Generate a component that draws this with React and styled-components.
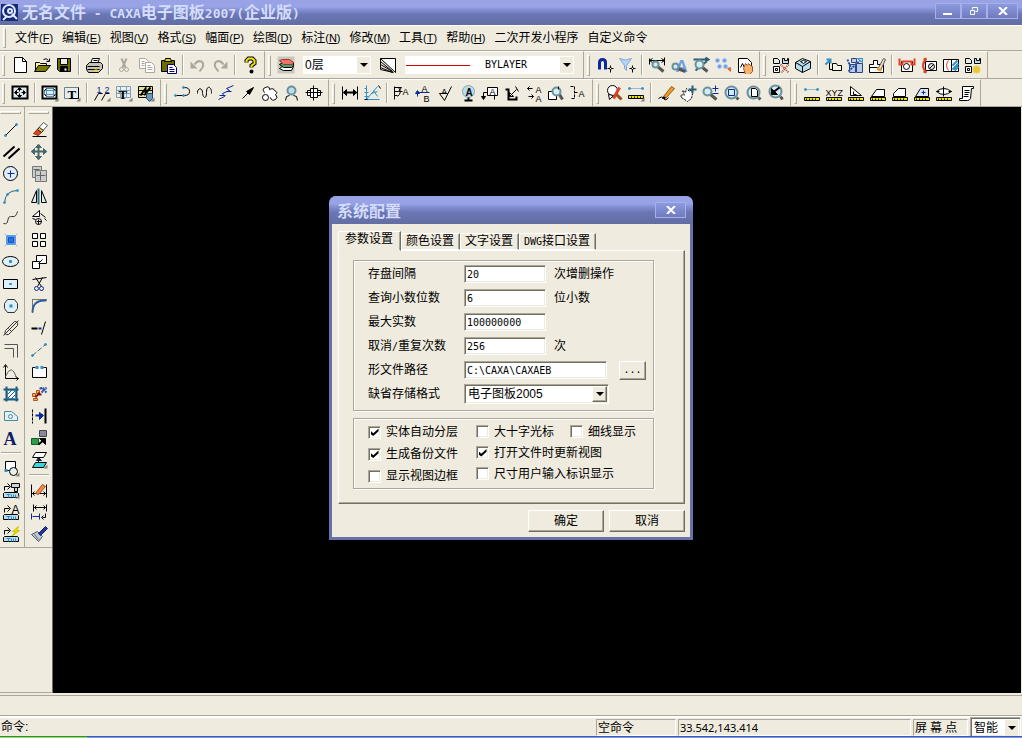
import React from 'react';
import styled, { createGlobalStyle, css } from 'styled-components';

const face = '#efebde';
const shade = '#aca899';
const dark = '#716f64';

const GlobalStyle = createGlobalStyle`
  *, *::before {
    box-sizing: border-box;
  }
  body {
    margin: 0;
    background: ${face};
    color: #000;
    font-family: "Liberation Sans", "Noto Sans CJK SC", sans-serif;
    font-size: 12px;
    line-height: 16px;
  }
  button, input, select {
    margin: 0;
    color: inherit;
    font: inherit;
  }
`;

/* ---------- icons ---------- */

const K = '#000';
const W = '#fff';
const G = '#aaa79b';
const B = '#0a2a9c';
const C = '#2f8fc8';
const L = '#b9dcee';
const Y = '#f2e600';
const R = '#d8432a';
const O = '#f09a2a';

const dot = (x, y, r) => `M${x - r} ${y}a${r} ${r} 0 1 0 ${2 * r} 0a${r} ${r} 0 1 0 ${-2 * r} 0z`;
const corner = ['M17 13v4h-4z', 'none', '#85837a'];
const lens = (x, y, r) => [
  [`M${x + r - 1} ${y + r - 1}L15 15`, '#555', 'none', 3],
  [dot(x, y, r), '#6b929c', '#d3edf3', 2],
];
const ruler = [['M1 13h15v3H1z', K, Y], ['M3 14v2M6 14v2M9 14v2M12 14v2', K]];
const thb = [['M2 11h13l1 1v4H1v-4z', K, L], ['M4 13h4M6 13v3M9 13v3M11 13v3M13 13v3', C]];
const blocks = [['M1 2h4l2 2v3H1z', K, '#e8e8e8'], ['M1 10h6v6H1zM3 12h2v2H3z', K, W], ['M10 7V2h2v2h3V2h1v5z', K, L]];

// shapes are [d, stroke, fill, width, dash]; objects are letters
const icons = {
  create: [['M3 1h8l4 4v11H3z', K, W], ['M11 1v4h4', K]],
  open: [['M2 15V6h4l1 1h6v3', K, '#f6ef9c'], ['M1 15l4-6h12l-5 6z', K, '#7b7b00'], ['M10 3q3-2 5 1M16 2v3h-3', K]],
  save: [['M2 2h13v13H4l-2-2z', K, '#6b6b00'], ['M5 2h7v6H5z', K, face], ['M5 10h7v5H5z', K, K], ['M10 12v2', W, 'none', 2]],
  print: [['M5 7l2-5h7l-2 5', K, W], ['M1 9l3-3h11l2 2v4l-4 4H3l-2-3z', K, '#c5c1b4'], ['M2 10h12M2 13h12M8 4h4', K], ['M9 14h3', Y, 'none', 2]],
  cut: [['M6 2l4 9M11 2l-4 9', G, 'none', 2], [dot(6, 13, 2), G], [dot(11, 13, 2), G]],
  copy: [['M2 2h6l3 3v7H2z', G, W], ['M8 6h6l3 3v7H8z', G, W], ['M4 5h3M4 7h3M4 9h3M10 9h3M10 11h5M10 13h5', G]],
  paste: [['M2 4h13v11H2z', K, '#6b6b00'], ['M5 5l1-3h5l1 3z', K, '#d6d200'], ['M8 8h6l3 3v6H8z', '#00007b', W], ['M10 11h3M10 13h5M10 15h5', '#00007b']],
  undo: [['M5 8c4-6 11-3 8 3l-3 4', G, 'none', 2], ['M1 5v7h7z', 'none', G]],
  redo: [['M12 8C8 2 1 5 4 11l3 4', G, 'none', 2], ['M16 5v7H9z', 'none', G]],
  help: [['M5 6V4l2-2h4l2 2v3l-3 2v2', K, 'none', 4], ['M5 6V4l2-2h4l2 2v3l-3 2v2', Y, 'none', 2], [dot(10, 15, 1), K, Y, 2]],
  layers: [['M0 0h17v17H0z', 'none', '#c9c6bc'], ['M2 12l3-2h11l-2 4H6z', K, W], ['M2 8l3-2h11v3l-2 2H6z', K, '#45a86a'], ['M2 4l3-1h7l4 3-1 2H6z', '#9c3434', '#ee7468']],
  linetype: [['M1 2h15v14z', K, W], ['M1 2v3l12 10M1 5v3l12 7M1 8v3l12 5M1 11v2l13 3', K]],
  magnet: [['M3 13V6q0-3 3-3t3 3v7', B, 'none', 3], ['M14 9v7M11 12h6', K], [dot(14, 12, 1), K, W]],
  funnel: [['M1 2q6 3 12 0L8 9v5l-2-2V9z', '#7ca7de', '#b7d3f5'], ['M14 9v7M11 12h6', K], [dot(14, 12, 1), K, W]],
  zoomWidth: [['M1 2v6M16 1v8M1 4h15M4 2L1 4l3 2M13 2l3 2-3 2', K], ...lens(7, 8, 3)],
  zoomText: [{ t: 'A', x: 5, y: 15, s: 17, c: '#6fa1e4', b: true }, ...lens(5, 10, 3)],
  zoomDim: [['M1 3h15M13 1l3 2-3 2M3 14L14 5', '#2c5c78', 'none', 2], ...lens(7, 8, 4)],
  starSet: [[`${dot(3, 4, 2)}${dot(10, 4, 2)}${dot(5, 10, 2)}${dot(11, 10, 2)}`, '#a9c6f5', '#6f9be2'], ['M13 12l3 3v-4z', '#e06a3c', '#e06a3c']],
  handSheet: [['M2 2h9l4 4v10H2z', K, W], ['M4 11l2-4 2 4', K], ['M7 12l2-5 2 2 1-2 2 2 2 1v5l-3 3H9z', '#a8511c', '#f5b46c']],
  blockDelete: [...blocks, ['M8 8l8 8M16 8l-7 8', '#b04a3c', 'none', 2, '1 1']],
  cube: [['M1 6l7-4 8 3v7l-8 4-7-4z', K, L], ['M1 6l7 4 8-5M8 10v6', K], ['M6 5l3-1 3 1-3 2z', K, W]],
  blockIn: [['M1 8l5-5', C, 'none', 2], ['M2 3h4v4', C, 'none', 2], ['M5 6v7h3', K], ['M8 7h4l1 2h4v5H8z', K, '#f3f6e6']],
  blockEdit: [['M5 2h5v4H5zM3 8h6v8H3zM10 7h6v9h-6z', '#29457c', '#b9cdea'], ['M1 3l4 10M2 15l6-6 8-7', '#234da8', 'none', 2, '2 1'], ['M11 2h5v4z', C, L]],
  blockBrush: [['M1 8h4V4h4v4h6v8H1z', K, W], ['M1 11h8', K], ['M9 13l6-11 2 1-5 11z', '#555', '#f1e2c8'], ['M9 12l4 2', O, 'none', 3]],
  partA: [['M3 5h11v10H3z', K, W], [dot(8, 10, 3), K], ['M1 2v6h3V5h9v3h3V2', R, 'none', 2]],
  partB: [['M5 5h11v9H5z', K, W], [dot(11, 10, 3), K, '#ddd'], ['M9 12l4-4', K], ['M6 2Q-1 9 6 16M6 2l-3 1M6 16l-3-1', R, 'none', 2]],
  partC: [['M1 3h15v12H1z', K, W], ['M9 3v12', K], ['M6 4q-4 5 0 10', R], ['M10 9l5-5M10 13l6-6M12 14l4-4', C, 'none', 2]],
  partD: [...blocks, ['M12 9v8M8 13h8M9 10l6 6M15 10l-6 6', '#e6c832', 'none', 2]],

  fit: [['M1 2h15v12H1z', K, '#dde9ea', 2], ['M8 4v3M8 9v3M4 8h3M10 8h3', K, 'none', 1], ['M6 5l2-2 2 2zM6 11l2 2 2-2zM5 6L3 8l2 2zM12 6l2 2-2 2z', K, K, 1]],
  frame: [['M1 2h14v12H1z', K, W, 2], ['M5 4h7v8H5zM3 6h11v4H3z', '#5f8fae', '#dcebf5'], ['M5 4L3 6M12 4l2 2M5 12l-2-2M12 12l2-2', K], corner],
  titleBlock: [['M1 3h14v11H1z', '#6c8490', '#e4eef0'], ['M15 3v11H6', K], { t: 'T', x: 4, y: 14, s: 13, c: K, b: true, serif: true }, corner],
  number: [{ t: '1', x: 3, y: 8, s: 9, c: B }, { t: '2', x: 11, y: 8, s: 9, c: B }, ['M1 16l4-7h4M8 16l4-7h4', K], corner],
  textTable: [['M1 2h14v11H1zM1 6h14M1 9h14M5 2v11M11 2v11', '#7fa0b0', '#e9f1f2'], { t: 'T', x: 3, y: 14, s: 13, c: K, b: true, serif: true }, corner],
  styleEdit: [['M1 2h14v11H1z', K, '#e7e48a'], ['M1 6h14M1 10h14', K], ['M3 11l5-7v5l5-6', K, 'none', 2], ['M9 9h6v5l-3 3-3-3z', '#24466e', '#6e95be'], corner],
  polyline: [['M2 11h9q5 0 5-4t-5-4', K], [`${dot(2, 11, 1)}${dot(10, 11, 1)}${dot(10, 3, 1)}`, C, C]],
  wave: [['M2 8c0-5 5-5 5 0s4 8 4 0 5-6 5 0', K], ['M2 8v1M16 8v1', K]],
  zigzag: [['M1 15l6-3-2-3 7-3-3-2 7-3', B, 'none'], ['M2 11h6M9 7h5', B]],
  arrow: [['M3 14l6-6', K], ['M7 7l7-4-4 7z', K, K]],
  cloud: [['M3 8q-3-4 1-5 4-2 4 2 4-2 5 1 4 2 1 4 3 3 0 5-4 2-5-2', K, W], [dot(4, 13, 3), K, W]],
  magnifierHand: [[dot(8, 6, 4), '#6b929c', L, 2], ['M2 16l1-4 3-1M14 16l-1-4-3-1', K]],
  axisBox: [['M5 4h7v9H5zM2 6h3v5H2zM12 6h3v5h-3z', K, W], ['M0 8h17M8 1v15', K]],
  dimWidth: [['M1 2v13M16 2v13', K], ['M2 8h13', K, 'none', 2], ['M5 5L2 8l3 3zM12 5l3 3-3 3z', K, K]],
  dimCoord: [['M3 1v14h13M3 15L14 2', C], ['M1 4h2M1 8h4M1 12h4M10 6l4 6M8 9l6-2', C, 'none'], ['M15 1l2 3M1 15h3', K]],
  roughness: [['M1 2v13M1 3h7l-3 4h4M1 7h4M1 11h3M5 3q4 5-1 9', K], { t: 'A', x: 9, y: 10, s: 9, c: K }],
  toleranceAB: [{ t: 'A', x: 6, y: 7, s: 9, c: K }, { t: 'B', x: 8, y: 17, s: 9, c: K }, ['M2 12V8h12', B], ['M0 9l2-3 2 3z', B, B]],
  datum: [['M2 9l5 7 7-14M2 9h8', K], { t: 'A', x: 4, y: 9, s: 8, c: K }],
  datumLens: [[dot(9, 7, 6), '#8aa6ae', L, 1], { t: 'A', x: 6, y: 11, s: 10, c: K, b: true }, ['M5 16h8M9 13v3', K, 'none', 2]],
  leaderText: [['M6 3h10v8H6z', K, W], { t: 'A', x: 8, y: 10, s: 9, c: K }, ['M6 8H2v4M13 11v4', K, 'none', 1], ['M0 12h4l-2 3z', K, K]],
  weld: [['M2 5h3v10h8v-3', K, 'none', 2], ['M6 12l7-7', K], ['M6 8v4h4zM12 2l3 5', K]],
  swapText: [['M2 4h5M2 4l2-2M2 4l2 2M3 12h5l-2-2M8 12l-2 2', K, 'none', 1], { t: 'A', x: 10, y: 8, s: 9, c: K }, { t: 'A', x: 10, y: 17, s: 9, c: K }],
  lensBlock: [['M1 7h8v8H1z', K, W], ...lens(9, 7, 4), ['M11 2v3', K]],
  dimText: [['M1 2h4v12H1M5 8h4', K, 'none', 1, '3 1'], { t: 'A', x: 9, y: 12, s: 9, c: K }],
  find: [[dot(7, 6, 5), K, W], ['M3 10l5 1-4 4z', K, W], ['M8 14l6-11', R, 'none', 3], ['M11 10l5 5', '#9c4f1c', 'none', 3]],
  measure: [['M2 4h13', C, 'none', 1, '1 1'], [`${dot(2, 4, 1)}${dot(15, 4, 1)}`, C, C], ['M1 11h15v3H1z', K, Y], ['M4 12v2M7 12v2M10 12v2M13 12v2', K], corner],
  pencil: [['M1 14q3-3 5 0t5-1', K], ['M6 12l8-10 3 2-8 9z', '#8c5a1b', O], ['M5 13l3 1', K, 'none', 2]],
  pan: [['M2 13q-2-4 3-2L3 6l3 2 1-4 3 3 2-2 1 4-1 5-4 3z', K, W, 1, '2 1'], ['M13 1v8M9 5h8', '#26607a', 'none', 2]],
  zoomScale: [...lens(6, 7, 4), ['M14 1v6M11 4h6M11 9h6', B]],
  zoomWindow: [...lens(8, 8, 6), ['M5 5h6v6H5z', B, 'none']],
  zoomPage: [...lens(8, 8, 6), ['M6 4h4l2 2v6H6z', K, W]],
  zoomBack: [...lens(8, 7, 6), ['M4 9l8-6', K, 'none', 2], ['M4 4v6h6z', K, K]],
  qDist: [['M2 5h13', C, 'none', 1, '1 1'], [`${dot(2, 5, 1)}${dot(14, 5, 1)}`, C, C], ...ruler],
  qCoord: [{ t: 'XYZ', x: 0, y: 11, s: 9, c: K }, ...ruler],
  qAngle: [['M3 2v9h11z', K, W], ['M6 7v3h3', K], ...ruler],
  qArea: [['M2 12l5-7h8v7z', K, W], ...ruler],
  qPerimeter: [['M2 12V9l5-5h7v8z', K, W], ...ruler],
  qCenter: [['M2 12l5-8h8v8z', K, '#dce9f4'], ['M10 6v4M8 8h4', B], ...ruler],
  qInertia: [['M1 7q7-6 15 0-8 6-15 0zM8 2v10M1 7h3M13 7h3', K, W], ...ruler],
  qSystem: [['M5 2h11v2h-2l-1 10q-1 2-3 2H2v-2h3z', K, W], ['M7 6h5M7 8h5M7 10h4M6 12h5', K]],

  line: [['M3 14L14 3', K, 'none', 1], [`${dot(3, 14, 1)}${dot(14, 3, 1)}`, C, C]],
  parallel: [['M1 13L12 3M6 15L17 5', K, 'none', 2]],
  circle: [[dot(8, 8, 7), K, '#dfeefa'], ['M8 5v7M5 8h7', B]],
  arc: [['M2 15Q3 3 15 3', '#2a627c', 'none'], [`${dot(2, 15, 1)}${dot(5, 7, 1)}${dot(15, 3, 1)}`, C, C]],
  spline: [['M1 14c6 2 3-7 7-7s5 1 7-5', '#333']],
  point: [['M4 4h9v9H4z', '#5a9ae6', '#5a9ae6'], ['M6 6h5v5H6z', '#1756c0', '#2c6fd8'], ['M2 2l2 2M15 2l-2 2M2 15l2-2M15 15l-2-2', '#8fb8ea']],
  ellipse: [['M0 8a8 5 0 1 0 16 0a8 5 0 1 0-16 0z', K, '#dff0f8'], ['M7 7h2v2H7z', C, C]],
  rect: [['M1 4h14v9H1z', K, '#dff0f8'], ['M7 8h2v1H7z', C, C]],
  polygon: [['M5 2h7l3 4v5l-3 4H5l-3-4V6z', '#333', '#dff0f8'], ['M8 8h1v1H8z', C, C, 2]],
  hole: [['M3 11L12 2q4 0 3 4l-9 9q-5 1-3-4zM1 16L16 1M6 9l3 3', '#333']],
  offset: [['M2 3h13v13M2 7h9v9', '#555', 'none', 1]],
  formula: [['M3 2v13h13M1 4l2-3 2 3M13 13l3 2-2 2', K], ['M3 13q6-14 11 1', '#666']],
  hatch: [['M1 4h15M1 14h15M4 1v15M14 1v15', '#245a78', 'none', 2], ['M5 5h8v8H5z', C, W], ['M5 9l4-4M5 13l8-8M9 13l4-4', '#245a78']],
  detail: [['M2 4h7l6 5v4H2z', '#4888a0', '#e3f0f4'], [dot(8, 9, 2), '#4888a0']],
  text: [{ t: 'A', x: 1, y: 15, s: 18, c: '#131c66', b: true, serif: true }],
  blockMake: [['M3 2h10v9H3z', K, W], [dot(11, 12, 4), K, '#e6f0f0'], ['M2 11h3', C, 'none', 3], corner],
  insertBlock: [['M2 9V5h5M5 2l3 3-3 3', K], ['M9 2h8v4h-8zM12 6v4h3V6', K, '#ccd7dd'], ...thb, corner],
  insertText: [['M2 9V5h5M5 2l3 3-3 3', K], { t: 'A', x: 9, y: 10, s: 12, c: K }, ...thb],
  insertFlash: [['M2 9V5h5M5 2l3 3-3 3', K], ['M16 1l-6 5h3l-4 5 8-6h-3z', '#cfc100', Y], ...thb],

  erase: [['M2 15h14', K], ['M3 12L13 1l4 3L8 14z', '#555', W], ['M3 12l4-4 4 3-3 3z', '#a8481c', R], ['M7 8l2-2 4 3-2 2z', '#222', '#e8c43c']],
  move: [['M8 1v15M1 8h15', '#48686c', 'none', 2], ['M5 4l3-3 3 3zM5 13l3 3 3-3zM4 5L1 8l3 3zM13 5l3 3-3 3z', '#48686c', '#48686c']],
  moveCopy: [['M2 1h9v4h5v11H5v-4H2z', '#777', '#ccc'], ['M5 5h11v11H5z', '#777', '#ccc'], ['M10 6v9M6 10h9M3 4h6', '#666']],
  mirror: [['M6 3v12H1zM11 3v12h5z', K, '#dcebee'], ['M8 1v16', '#2c7080', 'none', 2]],
  rotate: [['M2 7l7-6v6zM10 4l5 4', K, W], [dot(8, 12, 3), K, W], ['M8 10v5M6 12h5', K], ['M14 9l2 2M2 9l3 1', K]],
  array: [['M2 2h5v5H2zM10 2h5v5h-5zM2 10h5v5H2zM10 10h5v5h-5z', K, W, 1]],
  scale: [['M6 2h10v8H6z', K, W], ['M2 8h7v7H2z', K, W], ['M8 10l4-4', K]],
  trim: [['M2 4l14-2M5 2l6 9M12 2L7 11', K, 'none'], [`${dot(6, 13, 2)}${dot(11, 13, 2)}`, B, 'none']],
  fillet: [['M2 15V2h14', K, 'none', 1, '1 1'], ['M2 15Q2 2 16 3', '#2a5ca0', 'none', 2]],
  extend: [['M15 2L11 15', K], ['M1 9h6', K, 'none', 2], ['M8 9h3', B, 'none', 2]],
  breakLine: [['M2 14L15 3', '#357090', 'none', 1, '5 2'], [`${dot(2, 14, 1)}${dot(15, 3, 1)}`, C, C]],
  stretch: [['M5 4H2v10h14V4h-3', K, W], ['M5 4h3M10 4h3', C, 'none', 3]],
  explode: [['M2 8h3v3H2zM6 5h3v3H6zM3 13h4v2H3z', '#b5541c', '#f2b04a'], ['M9 7l-4 5M8 9h3', '#7d1212', 'none', 2], ['M10 2l6 5M11 7l5-5M9 3h7', '#2a4ca8', 'none', 2, '2 1']],
  align: [['M2 2v14', K, 'none', 1, '3 1'], ['M15 1v15', K, 'none', 2], ['M5 8h7', B, 'none', 2], ['M9 5l4 3-4 4z', B, B]],
  pasteBlock: [['M1 9h7v6H1z', '#135c28', '#2d9c4c'], ['M9 1h7v6H9z', '#444', '#8888a0'], ['M8 15l6-5', K, 'none', 2], ['M15 15V9H9z', K, K]],
  order: [['M5 1h11l-3 5H2z', K, W], ['M5 11h11l-3 5H2z', K, '#35d7e0'], ['M8 6v5', K], ['M6 9l2-3 3 3z', '#123', '#123'], corner],
  dimEdit: [['M1 3v13M16 3v13M2 12h13M4 10l-2 2 2 2M13 10l2 2-2 2', K], ['M5 12l7-9 3 2-7 8z', '#a34a1c', '#f28a4c']],
  dimMove: [['M3 1v7M16 1v7M4 4h11M6 2L4 4l2 2M13 2l2 2-2 2', K, 'none', 1], ['M1 10v6M9 10v6M2 13h7', B, 'none', 1], ['M12 14h3v-4M13 12l-2 2 2 2', K]],
  brush: [['M1 9l6-3 5 5-4 5z', '#4a5a66', '#bccbd2'], ['M8 8l7-7 2 2-7 7z', '#101c70', '#27389c'], ['M4 9l4 5', '#667']],
};

const Svg = styled.svg`
  display: block;
  flex: none;
`;

const Icon = ({ name }) =>
  <Svg width="18" height="18" viewBox="-0.5 -0.5 18 18" aria-hidden="true">
    {icons[name].map((s, i) =>
      Array.isArray(s)
        ? <path key={i} d={s[0]} stroke={s[1] || K} fill={s[2] || 'none'} strokeWidth={s[3] || 1} strokeDasharray={s[4]} />
        : <text
            key={i}
            x={s.x}
            y={s.y}
            fontSize={s.s}
            fill={s.c}
            fontWeight={s.b ? 700 : 400}
            fontFamily={s.serif ? 'Liberation Serif, serif' : 'Liberation Sans, sans-serif'}
          >{s.t}</text>
    )}
  </Svg>;

/* ---------- window ---------- */

const Window = styled.div`
  display: flex;
  flex-direction: column;
  min-height: 100vh;
  background: ${face};
`;

const titleFill = css`
  background: linear-gradient(#99a3e4 0%, #98a2e6 28%, #7f8bce 42%, #6b77b5 58%, #626da3 100%);
`;

const sunken = css`
  border: 1px solid;
  border-color: ${shade} #fff #fff ${shade};
  box-shadow: inset 1px 1px 0 ${dark}, inset -1px -1px 0 ${face};
`;

const raised = css`
  border: 1px solid;
  border-color: #fff ${dark} ${dark} #fff;
  box-shadow: inset -1px -1px 0 ${shade};
`;

const TitleBar = styled.header`
  ${titleFill}
  display: flex;
  align-items: center;
  height: 25px;
  padding: 0 4px 1px 1px;
  gap: 4px;
`;

const Title = styled.h1`
  flex: 1;
  margin: 0;
  color: #d3dcfb;
  font: 700 16px/24px "Noto Sans CJK SC", sans-serif;
  white-space: nowrap;
`;

const Latin = styled.span`
  font-family: "DejaVu Sans Mono", monospace;
  font-size: ${p => p.$size || 10}px;
`;

const Buttons = styled.div`
  display: flex;
  align-self: flex-start;
  padding-top: 3px;
`;

const TitleButton = styled.button`
  display: grid;
  place-items: center;
  width: ${p => p.$wide ? 31 : 26}px;
  height: 16px;
  padding: 0;
  border: 1px solid #a6b1ea;
  background: linear-gradient(#8e9ae0, #6f7bbd);
`;

const MenuBar = styled.nav`
  display: flex;
  align-items: center;
  height: 26px;
  padding-left: 15px;
  gap: 9px;
  border-top: 1px solid #fff;
  border-bottom: 1px solid ${shade};
  &::before {
    content: "";
    width: 3px;
    height: 20px;
    margin: 0 0 0 -12px;
    border: 1px solid;
    border-color: #fff ${shade} ${shade} #fff;
  }
`;

const MenuItem = styled.button`
  padding: 0;
  border: 0;
  background: none;
  white-space: nowrap;
`;

const Key = styled.span`
  font-size: 11px;
`;

const ToolRow = styled.div`
  display: flex;
  height: 28px;
  border-bottom: 1px solid ${shade};
  overflow: hidden;
`;

const Toolbar = styled.div`
  display: flex;
  align-items: center;
  padding: 0 3px 0 10px;
  border-top: 1px solid #fff;
  border-right: 1px solid ${shade};
  &:first-child {
    padding-left: 9px;
  }
  &::before {
    content: "";
    width: 3px;
    height: 21px;
    margin: 0 4px 0 -7px;
    border: 1px solid;
    border-color: #fff ${shade} ${shade} #fff;
  }
`;

const ToolButton = styled.button`
  display: grid;
  place-items: center;
  flex: none;
  width: 22px;
  height: 22px;
  padding: 0;
  border: 0;
  background: none;
`;

const Divider = styled.i`
  flex: none;
  width: 2px;
  height: 20px;
  margin: 0 3px;
  border-left: 1px solid ${shade};
  border-right: 1px solid #fff;
`;

const Combo = styled.span`
  display: grid;
  align-items: center;
  width: ${p => p.$width}px;
  height: 18px;
  margin: 0 ${p => p.$gap || 0}px;
  background: #fff;
  ${p => p.$sunken && css`
    ${sunken}
    height: 20px;
    padding: 1px;
  `}
  > * {
    grid-area: 1 / 1;
  }
`;

const Select = styled.select`
  appearance: none;
  width: 100%;
  padding: 0 0 0 ${p => p.$indent || 2}px;
  border: 0;
  background: none;
  line-height: 16px;
  outline: none;
  ${p => p.$mono && css`
    font-family: "DejaVu Sans Mono", monospace;
    font-size: 10px;
  `}
`;

const Arrow = styled.span`
  display: grid;
  place-items: center;
  justify-self: end;
  width: 15px;
  height: 18px;
  border: 1px solid #fff;
  background: ${face};
  pointer-events: none;
  ${p => p.$raised && css`
    ${raised}
    height: 16px;
  `}
`;

const LineSample = styled.i`
  width: 64px;
  height: 1px;
  margin-left: 1px;
  background: #d40000;
`;

const Workspace = styled.main`
  display: flex;
  flex: 1;
`;

const Dock = styled.aside`
  display: flex;
  align-items: flex-start;
  width: 53px;
  border-right: 1px solid ${dark};
  border-bottom: 1px solid ${shade};
`;

const Column = styled.div`
  display: flex;
  flex-direction: column;
  align-items: center;
  width: 25px;
  padding: 12px 3px 2px 0;
  border-right: 1px solid ${shade};
  border-bottom: 1px solid ${shade};
  &:last-child {
    width: 27px;
    padding-right: 0;
    border-right: 0;
  }
  &::before {
    content: "";
    width: 21px;
    height: 3px;
    margin: -8px 0 5px;
    border: 1px solid;
    border-color: #fff ${shade} ${shade} #fff;
  }
  ${Divider} {
    width: 20px;
    height: 2px;
    margin: 3px 0;
    border: 0;
    border-top: 1px solid ${shade};
    border-bottom: 1px solid #fff;
  }
`;

const Canvas = styled.section`
  flex: 1;
  margin-right: 1px;
  background: #000;
`;

const CommandLog = styled.div`
  height: 23px;
  margin-top: 2px;
  border-top: 1px solid ${shade};
  border-bottom: 2px solid #fff;
  box-shadow: inset 0 -1px 0 ${shade};
`;

const StatusBar = styled.footer`
  display: flex;
  align-items: center;
  height: 18px;
  padding-right: 1px;
  gap: 2px;
  white-space: nowrap;
`;

const CommandLabel = styled.label`
  display: flex;
  flex: 1;
  min-width: 0;
  padding-left: 1px;
`;

const CommandInput = styled.input`
  flex: 1;
  min-width: 0;
  padding: 0 4px;
  border: 0;
  background: none;
  outline: none;
`;

const Panel = styled.div`
  width: ${p => p.$width}px;
  height: 17px;
  padding-left: 1px;
  border: 1px solid;
  border-color: ${shade} #fff #fff ${shade};
  font-family: "Noto Sans", "Noto Sans CJK SC", sans-serif;
  font-size: ${p => p.$small ? 11 : 12}px;
`;

const Taskbar = styled.div`
  display: flex;
  height: 2px;
  background: linear-gradient(#3b5bb8 50%, #7d9bea 50%);
  &::before {
    content: "";
    width: 87px;
    background: linear-gradient(#3d8a2e 50%, #8be26a 50%);
  }
`;

/* ---------- dialog ---------- */

const Overlay = styled.div`
  position: fixed;
  inset: 0;
  display: grid;
  place-items: center;
  padding-bottom: 2px;
`;

const Dialog = styled.section`
  width: 364px;
  padding: 0 3px 3px;
  border-radius: 7px 7px 0 0;
  background: #6772a8;
  overflow: hidden;
`;

const DialogTitle = styled.div`
  ${titleFill}
  display: flex;
  align-items: center;
  justify-content: space-between;
  height: 28px;
  margin: 0 -3px;
  padding: 0 7px 0 8px;
`;

const DialogBody = styled.div`
  padding: 7px 5px 5px 6px;
  background: ${face};
`;

const Tabs = styled.div`
  display: flex;
  align-items: flex-end;
  height: 19px;
`;

const Tab = styled.button`
  ${raised}
  height: 17px;
  padding: 0 5px 0 4px;
  border-bottom-color: #fff;
  border-radius: 2px 0 0 0;
  background: ${face};
  box-shadow: inset -1px 0 0 ${shade};
  line-height: 15px;
  white-space: nowrap;
  ${p => p.$active && css`
    z-index: 1;
    height: 20px;
    margin-bottom: -1px;
    padding: 0 7px 4px 6px;
    border-bottom-color: ${face};
  `}
`;

const TabPanel = styled.div`
  ${raised}
  display: grid;
  gap: 7px;
  padding: 9px 30px 14px 14px;
`;

const Group = styled.fieldset`
  min-width: 0;
  margin: 0;
  padding: 0 0 0 14px;
  border: 1px solid ${shade};
  box-shadow: 1px 1px 0 #fff, inset 1px 1px 0 #fff;
`;

const Fields = styled(Group)`
  display: grid;
  grid-auto-rows: 24px;
  padding-top: 1px;
  padding-bottom: 4px;
`;

const Field = styled.div`
  display: flex;
  align-items: center;
`;

const FieldLabel = styled.label`
  width: 96px;
  white-space: nowrap;
`;

const TextBox = styled.input`
  ${sunken}
  width: ${p => p.$wide ? 143 : 82}px;
  height: 18px;
  padding: 0 2px;
  background: #fff;
  font-family: "DejaVu Sans Mono", monospace;
  font-size: 10px;
  outline: none;
`;

const Unit = styled.span`
  margin-left: 8px;
`;

const PushButton = styled.button`
  ${raised}
  width: 76px;
  height: 22px;
  padding: 0;
  background: ${face};
  line-height: 18px;
`;

const BrowseButton = styled(PushButton)`
  width: 27px;
  height: 19px;
  margin-left: 12px;
  font-family: "DejaVu Sans Mono", monospace;
  font-size: 10px;
  line-height: 12px;
`;

const Checks = styled(Group)`
  display: flex;
  align-items: flex-start;
  gap: 18px;
  height: 71px;
  padding-top: 2px;
`;

const CheckColumn = styled.div`
  display: grid;
  grid-auto-rows: ${p => p.$rows || 21}px;
`;

const CheckPair = styled.div`
  display: flex;
  gap: 16px;
`;

const CheckLabel = styled.label`
  display: flex;
  align-items: center;
  gap: 5px;
  white-space: nowrap;
`;

const CheckBox = styled.input`
  ${sunken}
  appearance: none;
  display: grid;
  place-items: center;
  flex: none;
  width: 13px;
  height: 13px;
  background: #fff;
  &:checked::before {
    content: "";
    width: 8px;
    height: 8px;
    background: #000;
    clip-path: polygon(0 35%, 35% 65%, 100% 5%, 100% 42%, 35% 100%, 0 75%);
  }
`;

const Actions = styled.div`
  display: flex;
  justify-content: flex-end;
  gap: 5px;
  margin-top: 6px;
`;

/* ---------- content ---------- */

const menus = [
  ['文件', 'F'], ['编辑', 'E'], ['视图', 'V'], ['格式', 'S'], ['幅面', 'P'], ['绘图', 'D'],
  ['标注', 'N'], ['修改', 'M'], ['工具', 'T'], ['帮助', 'H'], ['二次开发小程序'], ['自定义命令'],
];

const standardTools = 'create open save | print | cut copy paste | undo redo | help';
const snapTools = 'magnet funnel | zoomWidth zoomText zoomDim starSet handSheet';
const blockTools = 'blockDelete cube | blockIn blockEdit blockBrush | partA partB partC partD';

const secondRow = [
  'fit | frame titleBlock | number textTable styleEdit',
  'polyline wave zigzag arrow cloud magnifierHand axisBox',
  'dimWidth dimCoord | roughness toleranceAB datum datumLens leaderText weld swapText lensBlock dimText',
  'find measure | pencil pan zoomScale zoomWindow zoomPage zoomBack',
  'qDist qCoord qAngle qArea qPerimeter qCenter qInertia qSystem',
];

const dockTools = [
  'line parallel circle arc spline point ellipse rect polygon hole offset formula hatch detail text | blockMake insertBlock insertText insertFlash',
  'erase move moveCopy mirror rotate array scale trim fillet extend breakLine stretch explode align pasteBlock order | dimEdit dimMove brush',
];

const Tools = ({ list }) =>
  list.split(' ').map((name, i) =>
    name === '|'
      ? <Divider key={i} />
      : <ToolButton key={i} aria-label={name}><Icon name={name} /></ToolButton>
  );

const DropArrow = ({ up }) =>
  <Arrow $raised={up}>
    <Svg width="8" height="4" viewBox="0 0 8 4"><path d="M0 0h8L4 4z" /></Svg>
  </Arrow>;

const Cross = () =>
  <Svg width="10" height="8" viewBox="0 0 10 8"><path d="M1 0l8 8M9 0L1 8" stroke="#fff" strokeWidth="2" /></Svg>;

const Check = ({ label, checked }) =>
  <CheckLabel>
    <CheckBox type="checkbox" defaultChecked={checked} />
    {label}
  </CheckLabel>;

const TextField = ({ id, label, value, unit }) =>
  <Field>
    <FieldLabel htmlFor={id}>{label}</FieldLabel>
    <TextBox id={id} defaultValue={value} />
    {unit && <Unit>{unit}</Unit>}
  </Field>;

const ConfigDialog = () =>
  <Overlay>
    <Dialog role="dialog" aria-label="系统配置">
      <DialogTitle>
        <Title as="h2">系统配置</Title>
        <TitleButton $wide aria-label="关闭"><Cross /></TitleButton>
      </DialogTitle>
      <DialogBody>
        <Tabs role="tablist">
          <Tab role="tab" aria-selected="true" $active>参数设置</Tab>
          <Tab role="tab">颜色设置</Tab>
          <Tab role="tab">文字设置</Tab>
          <Tab role="tab"><Latin>DWG</Latin>接口设置</Tab>
        </Tabs>
        <TabPanel role="tabpanel">
          <Fields>
            <TextField id="interval" label="存盘间隔" value="20" unit="次增删操作" />
            <TextField id="decimals" label="查询小数位数" value="6" unit="位小数" />
            <TextField id="max" label="最大实数" value="100000000" />
            <TextField id="undo" label={<>取消<Latin>/</Latin>重复次数</>} value="256" unit="次" />
            <Field>
              <FieldLabel htmlFor="path">形文件路径</FieldLabel>
              <TextBox id="path" $wide defaultValue="C:\CAXA\CAXAEB" />
              <BrowseButton>...</BrowseButton>
            </Field>
            <Field>
              <FieldLabel htmlFor="format">缺省存储格式</FieldLabel>
              <Combo $width={145} $sunken>
                <Select id="format"><option>电子图板2005</option></Select>
                <DropArrow up />
              </Combo>
            </Field>
          </Fields>
          <Checks>
            <CheckColumn $rows={22}>
              <Check label="实体自动分层" checked />
              <Check label="生成备份文件" checked />
              <Check label="显示视图边框" />
            </CheckColumn>
            <CheckColumn>
              <CheckPair>
                <Check label="大十字光标" />
                <Check label="细线显示" />
              </CheckPair>
              <Check label="打开文件时更新视图" checked />
              <Check label="尺寸用户输入标识显示" />
            </CheckColumn>
          </Checks>
        </TabPanel>
        <Actions>
          <PushButton>确定</PushButton>
          <PushButton>取消</PushButton>
        </Actions>
      </DialogBody>
    </Dialog>
  </Overlay>;

export default () =>
  <Window>
    <GlobalStyle />
    <TitleBar>
      <Svg width="17" height="18" viewBox="0 0 17 18">
        <path d="M0 1h17v17H0z" fill="#152a78" />
        <circle cx="8" cy="8" r="6" fill="none" stroke="#dfe9ff" strokeWidth="2" />
        <circle cx="9" cy="8" r="2" fill="none" stroke="#dfe9ff" strokeWidth="2" />
        <path d="M2 17l4-4M11 11l5 5" stroke="#dfe9ff" strokeWidth="2" />
      </Svg>
      <Title>
        无名文件<Latin $size={13}> - CAXA</Latin>电子图板<Latin $size={13}>2007(</Latin>企业版<Latin $size={13}>)</Latin>
      </Title>
      <Buttons>
        <TitleButton aria-label="最小化">
          <Svg width="10" height="8" viewBox="0 0 10 8"><path d="M0 6h9v2H0z" fill="#fff" /></Svg>
        </TitleButton>
        <TitleButton aria-label="还原">
          <Svg width="8" height="8" viewBox="0 0 8 8">
            <path d="M2.5 2.5v-2h5v4h-2M.5 3.5h4v4h-4z" fill="none" stroke="#fff" />
          </Svg>
        </TitleButton>
        <TitleButton $wide aria-label="关闭"><Cross /></TitleButton>
      </Buttons>
    </TitleBar>
    <MenuBar>
      {menus.map(([label, key]) =>
        <MenuItem key={label}>
          {label}{key && <Key>(<u>{key}</u>)</Key>}
        </MenuItem>
      )}
    </MenuBar>
    <ToolRow>
      <Toolbar><Tools list={standardTools} /></Toolbar>
      <Toolbar>
        <Tools list="layers" />
        <Combo $width={68} $gap={6}>
          <Select aria-label="图层"><option>0层</option></Select>
          <DropArrow />
        </Combo>
        <Tools list="linetype" />
        <Combo $width={169} $gap={6}>
          <LineSample />
          <Select aria-label="线型" $indent={80} $mono><option>BYLAYER</option></Select>
          <DropArrow />
        </Combo>
      </Toolbar>
      <Toolbar><Tools list={snapTools} /></Toolbar>
      <Toolbar><Tools list={blockTools} /></Toolbar>
    </ToolRow>
    <ToolRow>
      {secondRow.map(list => <Toolbar key={list}><Tools list={list} /></Toolbar>)}
    </ToolRow>
    <Workspace>
      <Dock>
        {dockTools.map(list => <Column key={list}><Tools list={list} /></Column>)}
      </Dock>
      <Canvas />
    </Workspace>
    <CommandLog />
    <StatusBar>
      <CommandLabel>命令:<CommandInput /></CommandLabel>
      <Panel $width={80}>空命令</Panel>
      <Panel $width={233} $small>33.542,143.414</Panel>
      <Panel $width={55}>屏 幕 点</Panel>
      <Combo $width={51} $sunken>
        <Select aria-label="捕捉方式"><option>智能</option></Select>
        <DropArrow />
      </Combo>
    </StatusBar>
    <Taskbar />
    <ConfigDialog />
  </Window>;
